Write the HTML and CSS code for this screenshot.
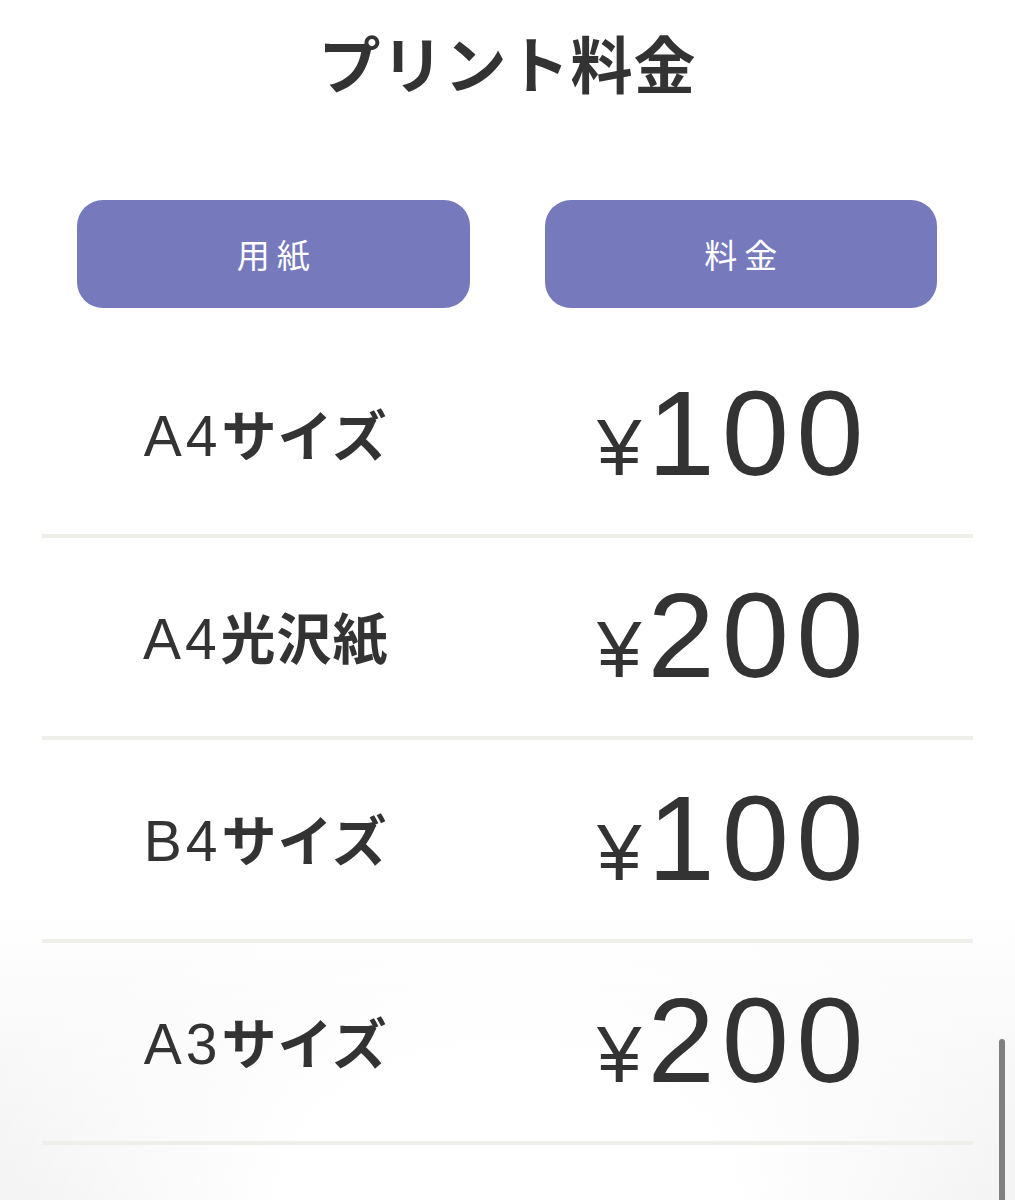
FILE: index.html
```html
<!DOCTYPE html>
<html lang="ja">
<head>
<meta charset="utf-8">
<title>プリント料金</title>
<link rel="stylesheet" href="styles.css">
</head>
<body>
<main class="page">
  <h1 class="title">プリント料金</h1>
  <div class="heads">
    <div class="head">用紙</div>
    <div class="head">料金</div>
  </div>
  <div class="table">
    <div class="row">
      <div class="paper"><span class="lat">A4</span><span class="ja">サイズ</span></div>
      <div class="price"><span class="yen">¥</span><span class="num">100</span></div>
    </div>
    <div class="row">
      <div class="paper"><span class="lat">A4</span><span class="ja">光沢紙</span></div>
      <div class="price"><span class="yen">¥</span><span class="num">200</span></div>
    </div>
    <div class="row">
      <div class="paper"><span class="lat">B4</span><span class="ja">サイズ</span></div>
      <div class="price"><span class="yen">¥</span><span class="num">100</span></div>
    </div>
    <div class="row">
      <div class="paper"><span class="lat">A3</span><span class="ja">サイズ</span></div>
      <div class="price"><span class="yen">¥</span><span class="num">200</span></div>
    </div>
  </div>
</main>
<div class="scrollbar"></div>
</body>
</html>
```
FILE: styles.css
```css
html, body {
  margin: 0;
  padding: 0;
}
body {
  width: 1015px;
  height: 1200px;
  overflow: hidden;
  position: relative;
  color: #333;
  font-family: "Noto Sans CJK JP", "Liberation Sans", sans-serif;
  background:
    radial-gradient(ellipse 55% 30% at 50% 100%, rgba(255,255,255,1) 40%, rgba(255,255,255,0) 100%),
    linear-gradient(to bottom, #ffffff 0%, #ffffff 76%, #f1f1f1 100%);
}
.page {
  padding-top: 27px;
}
.title {
  margin: 0;
  text-align: center;
  font-size: 62px;
  line-height: 70px;
  font-weight: 700;
  letter-spacing: 1px;
  color: #333;
}
.heads {
  display: grid;
  grid-template-columns: 1fr 1fr;
  column-gap: 75px;
  padding: 0 78px 0 77px;
  margin-top: 103px;
}
.head {
  height: 108px;
  border-radius: 26px;
  background: #7779bd;
  color: #fff;
  display: flex;
  align-items: center;
  justify-content: center;
  font-size: 33px;
  font-weight: 400;
  letter-spacing: 7px;
  padding-left: 7px;
}
.table {
  margin: 27px 42px 0 42px;
}
.row {
  display: grid;
  grid-template-columns: 1fr 1fr;
  align-items: center;
  height: 198.5px;
  box-sizing: content-box;
  padding-bottom: 0;
  border-bottom: 4px solid #efefea;
}
.paper {
  text-align: center;
  white-space: nowrap;
  padding-right: 18px;
  margin-bottom: 4px;
}
.lat {
  font-family: "Liberation Sans", Arial, sans-serif;
  font-size: 57px;
  font-weight: 400;
  letter-spacing: 4px;
}
.ja {
  font-family: "Noto Sans CJK JP", sans-serif;
  font-size: 55px;
  font-weight: 700;
  letter-spacing: 1px;
}
.price {
  text-align: center;
  white-space: nowrap;
  font-family: "Liberation Sans", Arial, sans-serif;
  line-height: 1;
  padding-right: 13px;
  margin-bottom: 2px;
}
.yen {
  font-size: 80px;
  margin-right: 6px;
}
.num {
  font-size: 121px;
  letter-spacing: 7px;
}
.scrollbar {
  position: absolute;
  left: 999px;
  top: 1039px;
  width: 6px;
  height: 170px;
  border-radius: 3px;
  background: #808080;
}
```
